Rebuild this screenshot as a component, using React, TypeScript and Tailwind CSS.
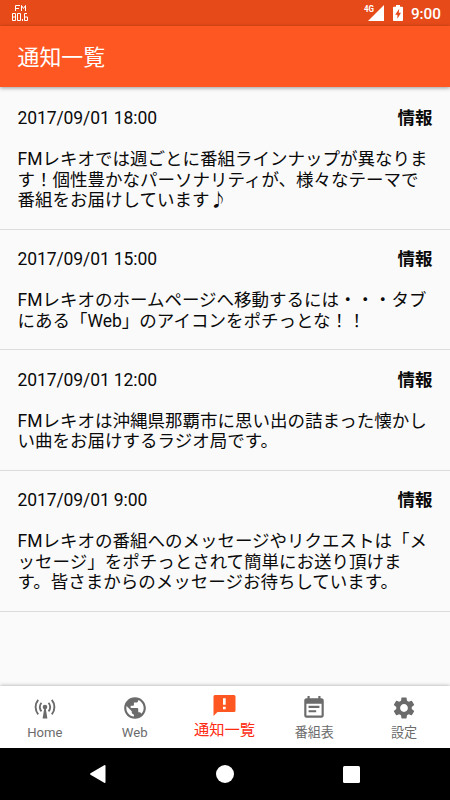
import type { ReactNode } from "react";
import { MdEventNote, MdPublic, MdSettings } from "react-icons/md";

type Notice = {
  date: string;
  lines: string[];
};

const notices: Notice[] = [
  {
    date: "2017/09/01 18:00",
    lines: [
      "FMレキオでは週ごとに番組ラインナップが異なりま",
      "す！個性豊かなパーソナリティが、様々なテーマで",
      "番組をお届けしています♪",
    ],
  },
  {
    date: "2017/09/01 15:00",
    lines: ["FMレキオのホームページへ移動するには・・・タブ", "にある「Web」のアイコンをポチっとな！！"],
  },
  {
    date: "2017/09/01 12:00",
    lines: ["FMレキオは沖縄県那覇市に思い出の詰まった懐かし", "い曲をお届けするラジオ局です。"],
  },
  {
    date: "2017/09/01 9:00",
    lines: [
      "FMレキオの番組へのメッセージやリクエストは「メ",
      "ッセージ」をポチっとされて簡単にお送り頂けま",
      "す。皆さまからのメッセージお待ちしています。",
    ],
  },
];

function AntennaIcon() {
  return (
    <svg viewBox="0 0 26 26" width="26" height="26" fill="none" stroke="currentColor">
      <circle cx="13" cy="12" r="2.3" fill="currentColor" stroke="none" />
      <path d="M12.300 13h1.400l1.700 10.500h-4.800z" fill="currentColor" stroke="none" />
      <path d="M9.500 7.900a6 6 0 0 0 0 8.400M16.500 7.900a6 6 0 0 1 0 8.400" strokeWidth="1.900" />
      <path d="M6.200 4.800a11.500 11.500 0 0 0 0 14.600M19.800 4.800a11.500 11.500 0 0 1 0 14.600" strokeWidth="1.900" />
    </svg>
  );
}

function FeedbackIcon() {
  return (
    <svg viewBox="0 0 26 26" width="26" height="26" fill="currentColor">
      <path
        fillRule="evenodd"
        d="M4 2h19q1.500 0 1.500 1.500v14q0 1.500-1.500 1.500H6.500L2.500 23V3.500Q2.500 2 4 2zM12 5.300v6.400h2.700V5.300zM12 13.800v2.500h2.700v-2.500z"
      />
    </svg>
  );
}

function StatusBar() {
  return (
    <div className="flex h-[26px] shrink-0 items-center bg-[#e64a19] pl-[11px] pr-[9px] text-white">
      <svg width="18" height="18" viewBox="0 0 18 18" fill="none" stroke="currentColor" strokeWidth="1">
        <path d="M4.500 7V1.500H9M4.500 4.500H8M10.500 7V1.500L12.500 4.500L14.500 1.500V7" />
        <path d="M1.500 9.500h3v7h-3zM1.500 13h3M6.500 9.500h3v7h-3zM11.500 15v2M16 9.500h-2.500v7h3V13h-3" />
      </svg>
      <div className="ml-auto flex items-center">
        <svg width="29" height="20" viewBox="0 0 29 20" fill="currentColor">
          <path d="M21 2v16H5z" />
          <text x="1" y="9.300" fontSize="9.500" fontWeight="700" fontFamily="Roboto" textLength="10" lengthAdjust="spacingAndGlyphs">4G</text>
        </svg>
        <svg className="ml-px mr-2" width="10" height="18" viewBox="0 0 10 18">
          <path d="M3 1h4v1.700h2.200q.8 0 .8.8v12.700q0 .8-.8.8H.8q-.8 0-.8-.8V3.500q0-.8.8-.8H3z" fill="currentColor" />
          <path d="M6.200 4.800L2.200 10.700h2.200v4l3.600-5.900H5.800z" fill="#e64a19" />
        </svg>
        <span className="pt-[3px] text-[15.300px] font-medium leading-none">9:00</span>
      </div>
    </div>
  );
}

function NoticeRow({ notice }: { notice: Notice }) {
  return (
    <li className="border-b border-[#dcdcdc] px-[17.500px] pb-[17.800px] pt-[19.300px]">
      <div className="flex h-[21px] items-center justify-between">
        <span className="tracking-[-0.100px]">{notice.date}</span>
        <span className="font-bold">情報</span>
      </div>
      <div className="mt-5 leading-[20.700px]">
        {notice.lines.map((line) => (
          <p key={line} className="whitespace-nowrap">{line}</p>
        ))}
      </div>
    </li>
  );
}

function NavItem({ icon, label, active }: { icon: ReactNode; label: string; active?: boolean }) {
  return active ? (
    <button className="flex flex-1 flex-col items-center pt-[7px] text-[#ff5722]">
      {icon}
      <span className="mt-px text-[15.300px] leading-[20px] text-[#ff2a12]">{label}</span>
    </button>
  ) : (
    <button className="flex flex-1 flex-col items-center pt-[9px] text-[#6b6b6b]">
      {icon}
      <span className="mt-[3px] text-[13.100px] leading-[18px]">{label}</span>
    </button>
  );
}

export default function App() {
  return (
    <div
      lang="ja"
      className="flex h-[800px] w-[450px] flex-col overflow-hidden bg-[#fafafa] font-['Roboto','Noto_Sans_CJK_JP',sans-serif] text-[17.500px] text-[#0a0a0a]"
    >
      <StatusBar />
      <header className="z-10 flex h-[61px] shrink-0 items-center bg-[#ff5722] pl-[17.500px] pt-0.5 shadow-[0_1px_4px_rgba(0,0,0,0.4)]">
        <h1 className="text-[21.900px] leading-none text-white">通知一覧</h1>
      </header>

      {/* Notices */}
      <ul className="flex-1 pt-[1.500px]">
        {notices.map((notice) => (
          <NoticeRow key={notice.date} notice={notice} />
        ))}
      </ul>

      {/* Bottom tabs */}
      <nav className="flex h-[62px] shrink-0 bg-white pr-px shadow-[0_0_4px_rgba(0,0,0,0.35)]">
        <NavItem icon={<AntennaIcon />} label="Home" />
        <NavItem icon={<MdPublic size={26} />} label="Web" />
        <NavItem icon={<FeedbackIcon />} label="通知一覧" active />
        <NavItem icon={<MdEventNote size={26} />} label="番組表" />
        <NavItem icon={<MdSettings size={26} />} label="設定" />
      </nav>

      {/* System buttons */}
      <div className="z-10 flex h-[52px] shrink-0 items-center justify-center gap-[109px] bg-black pr-0.5 text-white">
        <svg width="18" height="20" viewBox="0 0 18 20" fill="currentColor">
          <path d="M1.500 9.200L15.200 1.300q1.300-.6 1.300.8v15.800q0 1.400-1.300.8L1.500 10.800q-1-.8 0-1.600z" />
        </svg>
        <div className="size-[18px] rounded-full bg-white" />
        <div className="size-[17px] rounded-[1.500px] bg-white" />
      </div>
    </div>
  );
}
